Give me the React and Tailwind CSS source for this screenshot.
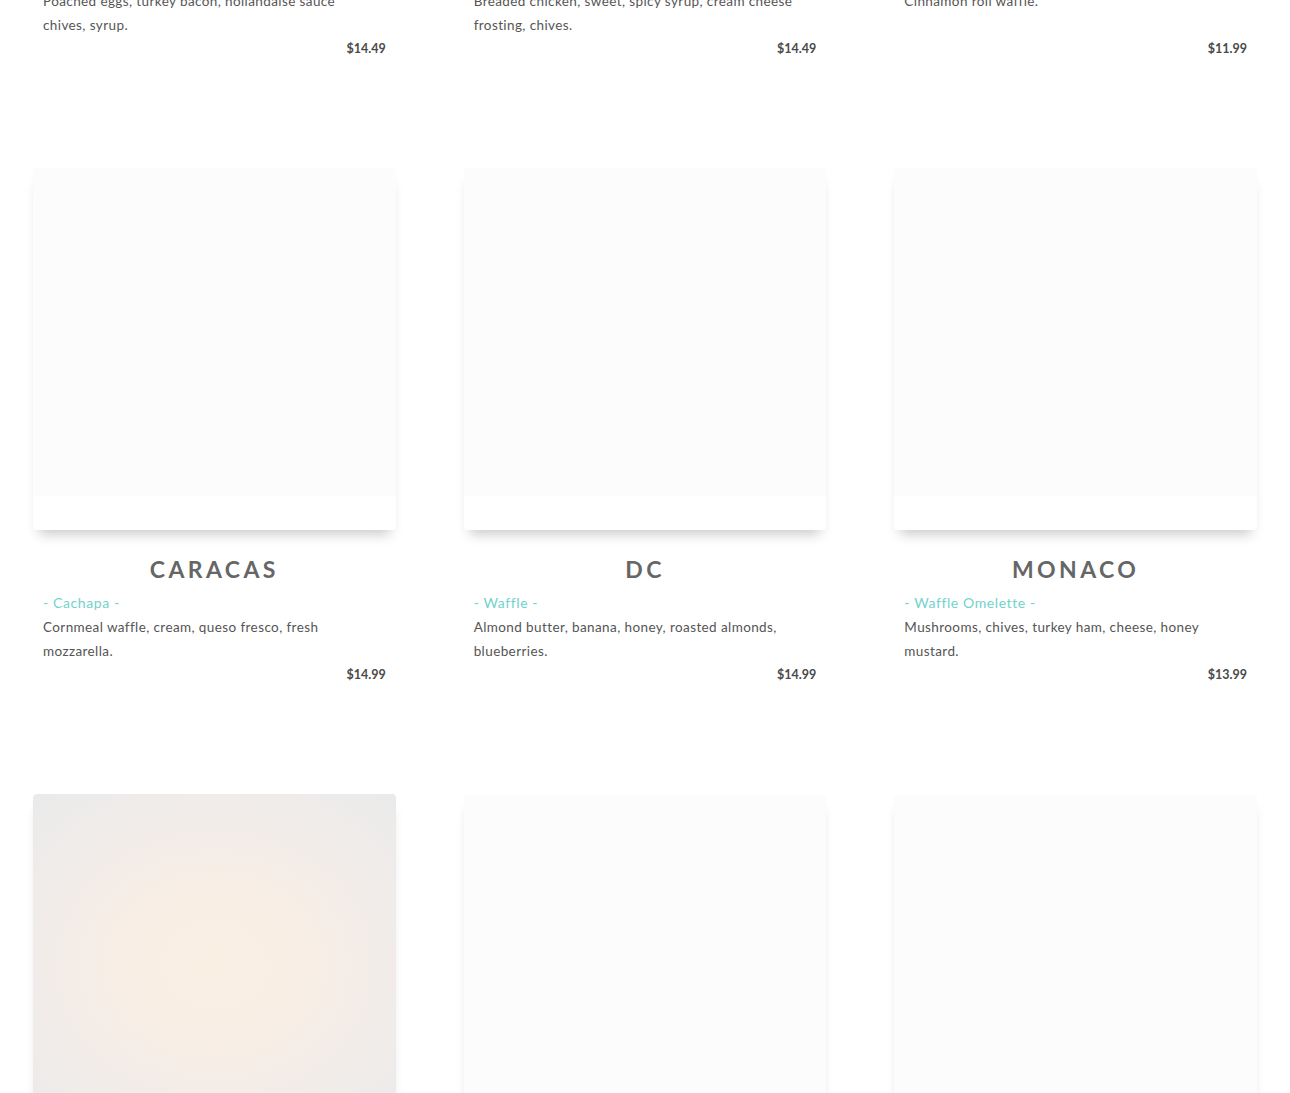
import React from 'react';

const ITEMS = [
  { city: 'Paris', sub: 'Benedict Waffle', desc: 'Poached eggs, turkey bacon, hollandaise sauce chives, syrup.', price: '$14.49' },
  { city: 'Nashville', sub: 'Chicken & Waffle', desc: 'Breaded chicken, sweet, spicy syrup, cream cheese frosting, chives.', price: '$14.49' },
  { city: 'Vienna', sub: 'Cinnamon Waffle', desc: 'Cinnamon roll waffle.', price: '$11.99' },
  { city: 'Caracas', sub: 'Cachapa', desc: 'Cornmeal waffle, cream, queso fresco, fresh mozzarella.', price: '$14.99' },
  { city: 'DC', sub: 'Waffle', desc: 'Almond butter, banana, honey, roasted almonds, blueberries.', price: '$14.99' },
  { city: 'Monaco', sub: 'Waffle Omelette', desc: 'Mushrooms, chives, turkey ham, cheese, honey mustard.', price: '$13.99' },
  { city: 'Lima', sub: 'Tres Leches', desc: 'Sponge waffle, three milks, whipped cream.', price: '$12.99', warm: true },
  { city: 'Oslo', sub: 'Heart Waffle', desc: 'Brown cheese, sour cream, strawberry jam.', price: '$12.49' },
  { city: 'Tokyo', sub: 'Matcha Waffle', desc: 'Matcha batter, red bean, whipped cream.', price: '$13.49' },
];

function MenuCard({ item }) {
  return (
    <div className="flex flex-col">
      {/* Photo frame */}
      <div className="aspect-square flex flex-col bg-white rounded-[4px] shadow-[0_10px_12px_-6px_rgba(0,0,0,0.22)]">
        <div
          className={
            item.warm
              ? 'flex-1 rounded-t-[4px] bg-[radial-gradient(ellipse_75%_70%_at_50%_52%,#faefe3_0%,#f8eee5_35%,#f0ecea_70%,#eaeaea_100%)]'
              : 'flex-1 rounded-t-[4px] bg-[#fcfcfc]'
          }
        />
        <div className="h-[34px] rounded-b-[4px] bg-white" />
      </div>

      {/* Text */}
      <h3 className="mt-[17px] h-[44px] flex items-center justify-center text-[23px] font-bold tracking-[3.4px] uppercase text-[#666666]">
        {item.city}
      </h3>
      <div className="px-[10px] text-[13.5px] leading-[24px] tracking-[0.4px]">
        <p className="text-[14px] tracking-[0.6px] text-[#72d2cc]">- {item.sub} -</p>
        <p className="text-[#555555] pr-[14px] min-h-[48px]">{item.desc}</p>
        <p className="text-right font-bold text-[12.5px] text-[#4a4a4a] tracking-normal">{item.price}</p>
      </div>
    </div>
  );
}

export default function App() {
  return (
    <div className="h-[1093px] overflow-hidden bg-white font-['Lato','Open_Sans',sans-serif]">
      <div className="mt-[-459px] px-[33px] grid grid-cols-3 gap-x-[68px] gap-y-[107px]">
        {ITEMS.map(item => (
          <MenuCard key={item.city} item={item} />
        ))}
      </div>
    </div>
  );
}
